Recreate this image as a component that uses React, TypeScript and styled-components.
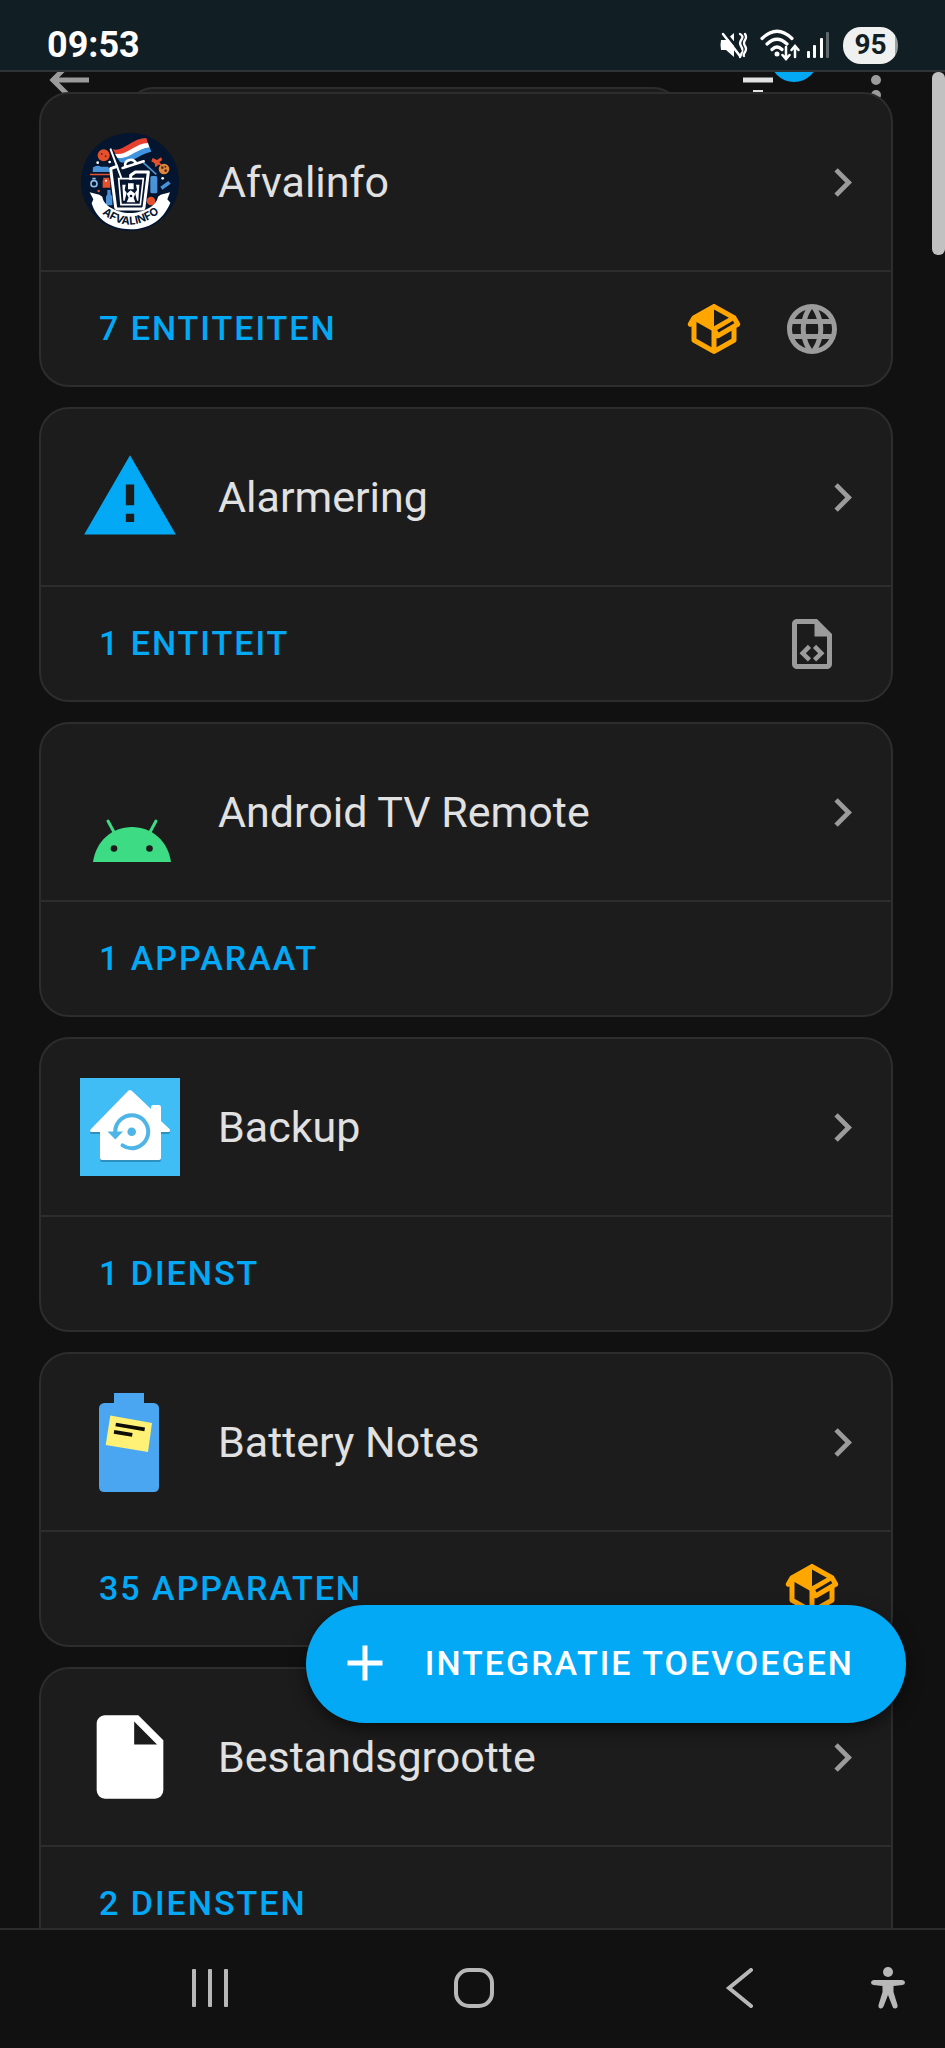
import React from "react";
import styled, { createGlobalStyle } from "styled-components";

const GlobalStyle = createGlobalStyle`
  *, *::before, *::after { box-sizing: border-box; }
  body {
    margin: 0;
    background: #111111;
    color: #e1e1e1;
    font-family: Roboto, "Liberation Sans", sans-serif;
  }
  button { font: inherit; color: inherit; background: none; border: 0; padding: 0; cursor: pointer; }
  a { color: inherit; text-decoration: none; }
  svg { display: block; flex: none; }
`;

const Screen = styled.div`
  display: flex;
  flex-direction: column;
  height: 100vh;
  overflow: hidden;
`;

/* ---------- status bar ---------- */

const StatusBar = styled.header`
  flex: none;
  display: flex;
  align-items: center;
  justify-content: space-between;
  height: 72px;
  padding: 20px 47px 0 47px;
  background: #111e24;
  border-bottom: 2px solid #2f3437;
  position: relative;
  z-index: 2;
`;

const Clock = styled.time`
  color: #ffffff;
  font-size: 36px;
  line-height: 40px;
  font-weight: 700;
`;

const StatusIcons = styled.div`
  display: flex;
  align-items: center;
  gap: 12px;
`;

const NetworkIcons = styled.div`
  display: flex;
  align-items: center;
  gap: 7px;
`;

const Battery = styled.span`
  display: flex;
  align-items: center;
  justify-content: center;
  width: 55px;
  height: 37px;
  border-radius: 18px;
  background: linear-gradient(90deg, #eff1f1 94%, #9a9fa1 94%);
  color: #111e24;
  font-size: 28px;
  line-height: 32px;
  font-weight: 700;
`;

/* ---------- scrolled content ---------- */

const Content = styled.main`
  flex: 1;
  min-height: 0;
  position: relative;
  overflow: hidden;
`;

const Scrolled = styled.div`
  margin-top: -22px;
`;

const Toolbar = styled.div`
  display: flex;
  align-items: flex-start;
  gap: 48px;
  height: 60px;
  padding: 0 39px;
`;

const IconButton = styled.button<{ $tone?: "muted" | "bright" }>`
  position: relative;
  width: 60px;
  height: 60px;
  flex: none;
  color: ${(p) => (p.$tone === "bright" ? "#e1e1e1" : "#9b9b9b")};
`;

const FilterBadge = styled.span`
  position: absolute;
  top: -16px;
  left: 42px;
  width: 48px;
  height: 48px;
  border-radius: 50%;
  background: #03a9f4;
`;

const SearchArea = styled.div`
  flex: 1;
  min-width: 0;
  display: flex;
  gap: 28px;
`;

const ToolbarActions = styled.div`
  flex: none;
  display: flex;
  gap: 58px;
`;

const SearchInput = styled.input`
  flex: 1;
  min-width: 0;
  height: 100px;
  margin-top: 37px;
  border: 2px solid #2d2d2d;
  border-radius: 26px;
  background: #1c1c1c;
  color: #e1e1e1;
  font: 43px/56px Roboto, sans-serif;
`;

const CardList = styled.ul`
  list-style: none;
  position: relative;
  display: flex;
  flex-direction: column;
  gap: 20px;
  margin: -18px 0 0;
  padding: 0 52px 0 39px;
`;

const Card = styled.li`
  background: #1c1c1c;
  border: 2px solid #2d2d2d;
  border-radius: 30px;
  overflow: hidden;
`;

const CardHeader = styled.a`
  display: flex;
  align-items: center;
  gap: 38px;
  height: 178px;
  padding: 0 20px 0 39px;
  border-bottom: 2px solid #2d2d2d;
  color: #9b9b9b;
`;

const CardTitle = styled.h2`
  flex: 1;
  margin: 0;
  color: #e1e1e1;
  font-size: 43px;
  line-height: 56px;
  font-weight: 400;
`;

const CardFooter = styled.div`
  display: flex;
  align-items: center;
  gap: 38px;
  height: 113px;
  padding: 0 49px 0 58px;
`;

const EntriesLink = styled.a`
  margin-right: auto;
  padding-bottom: 2px;
  color: #03a9f4;
  font-size: 34px;
  line-height: 40px;
  font-weight: 500;
  letter-spacing: 2px;
  text-transform: uppercase;
`;

const StateIcon = styled.svg<{ $custom?: boolean }>`
  width: 60px;
  height: 60px;
  fill: ${(p) => (p.$custom ? "#ffa600" : "#9b9b9b")};
`;

const ScrollThumb = styled.div`
  position: absolute;
  top: 0;
  right: 0;
  width: 13px;
  height: 183px;
  border-radius: 6px;
  background: #c1c1c1;
`;

const AddButton = styled.button`
  && {
    position: absolute;
    right: 39px;
    bottom: 205px;
    display: flex;
    align-items: center;
    gap: 30px;
    height: 118px;
    padding: 0 52px 2px 29px;
    border-radius: 59px;
    background: #03a9f4;
    color: #ffffff;
    box-shadow: 0 6px 16px rgba(0, 0, 0, 0.5);
    font-size: 34px;
    line-height: 40px;
    font-weight: 500;
    letter-spacing: 2px;
    text-transform: uppercase;
    white-space: nowrap;
  }
`;

/* ---------- system navigation ---------- */

const NavBar = styled.nav`
  flex: none;
  display: grid;
  grid-template-columns: repeat(3, 1fr) 34px;
  align-items: center;
  height: 120px;
  padding: 0 40px 2px 78px;
  border-top: 2px solid #2d2d2d;
  background: #111111;
`;

const NavButton = styled.button`
  display: flex;
  justify-content: center;
  color: #b8b8b8;
`;

/* ---------- icon paths ---------- */

const paths = {
  back: "M20,11V13H8L13.5,18.5L12.08,19.92L4.16,12L12.08,4.08L13.5,5.5L8,11H20Z",
  filter: "M6,13H18V11H6M3,6V8H21V6M10,18H14V16H10V18Z",
  dots: "M12,16A2,2 0 0,1 14,18A2,2 0 0,1 12,20A2,2 0 0,1 10,18A2,2 0 0,1 12,16M12,10A2,2 0 0,1 14,12A2,2 0 0,1 12,14A2,2 0 0,1 10,12A2,2 0 0,1 12,10M12,4A2,2 0 0,1 14,6A2,2 0 0,1 12,8A2,2 0 0,1 10,6A2,2 0 0,1 12,4Z",
  chevron: "M8.59,16.58L13.17,12L8.59,7.41L10,6L16,12L10,18L8.59,16.58Z",
  plus: "M19,13H13V19H11V13H5V11H11V5H13V11H19V13Z",
  custom:
    "M2,10.96C1.5,10.68 1.35,10.07 1.63,9.59L3.13,7C3.24,6.8 3.41,6.66 3.6,6.58L11.43,2.18C11.59,2.06 11.79,2 12,2C12.21,2 12.41,2.06 12.57,2.18L20.47,6.62C20.66,6.72 20.82,6.88 20.91,7.08L22.36,9.6C22.64,10.08 22.47,10.69 22,10.96L21,11.54V16.5C21,16.88 20.79,17.21 20.47,17.38L12.57,21.82C12.41,21.94 12.21,22 12,22C11.79,22 11.59,21.94 11.43,21.82L3.53,17.38C3.21,17.21 3,16.88 3,16.5V10.96C2.7,11.13 2.32,11.14 2,10.96M12,4.15V4.15L12,10.85V10.85L17.96,7.5L12,4.15M5,15.91L11,19.29V12.58L5,9.21V15.91M19,15.91V12.69L14,15.59C13.67,15.77 13.3,15.76 13,15.6V19.29L19,15.91M13.85,13.36L20.13,9.73L19.55,8.72L13.27,12.35L13.85,13.36Z",
  web: "M16.36,14C16.44,13.34 16.5,12.68 16.5,12C16.5,11.32 16.44,10.66 16.36,10H19.74C19.9,10.64 20,11.31 20,12C20,12.69 19.9,13.36 19.74,14M14.59,19.56C15.19,18.45 15.65,17.25 15.97,16H18.92C17.96,17.65 16.43,18.93 14.59,19.56M14.34,14H9.66C9.56,13.34 9.5,12.68 9.5,12C9.5,11.32 9.56,10.65 9.66,10H14.34C14.43,10.65 14.5,11.32 14.5,12C14.5,12.68 14.43,13.34 14.34,14M12,19.96C11.17,18.76 10.5,17.43 10.09,16H13.91C13.5,17.43 12.83,18.76 12,19.96M8,8H5.08C6.03,6.34 7.57,5.06 9.4,4.44C8.8,5.55 8.35,6.75 8,8M5.08,16H8C8.35,17.25 8.8,18.45 9.4,19.56C7.57,18.93 6.03,17.65 5.08,16M4.26,14C4.1,13.36 4,12.69 4,12C4,11.31 4.1,10.64 4.26,10H7.64C7.56,10.66 7.5,11.32 7.5,12C7.5,12.68 7.56,13.34 7.64,14M12,4.03C12.83,5.23 13.5,6.57 13.91,8H10.09C10.5,6.57 11.17,5.23 12,4.03M18.92,8H15.97C15.65,6.75 15.19,5.55 14.59,4.44C16.43,5.07 17.96,6.34 18.92,8M12,2C6.47,2 2,6.5 2,12A10,10 0 0,0 12,22A10,10 0 0,0 22,12A10,10 0 0,0 12,2Z",
  yaml: "M14,2H6C4.89,2 4,2.9 4,4V20C4,21.11 4.89,22 6,22H18C19.11,22 20,21.11 20,20V8L14,2M18,20H6V4H13V9H18V20M9.54,15.65L11.63,17.74L10.35,19L7,15.65L10.35,12.3L11.63,13.56L9.54,15.65M17,15.65L13.65,19L12.38,17.74L14.47,15.65L12.38,13.56L13.65,12.3L17,15.65Z",
  alert: "M13,14H11V9H13M13,18H11V16H13M1,21H23L12,2L1,21Z",
  file: "M13,9V3.5L18.5,9M6,2C4.89,2 4,2.89 4,4V20A2,2 0 0,0 6,22H18A2,2 0 0,0 20,20V8L14,2H6Z",
};

const Glyph = ({ d, size }: { d: string; size: number }) => (
  <svg viewBox="0 0 24 24" width={size} height={size} fill="currentColor" aria-hidden="true">
    <path d={d} />
  </svg>
);

/* ---------- integration logos ---------- */

const AfvalinfoLogo = () => (
  <svg viewBox="14 20 300 300" width="100" height="100" aria-hidden="true">
    <circle cx="164" cy="170" r="147" fill="#04152f" />
    {/* flag */}
    <path d="M112 72C142 82 170 38 213 38L218 54C182 56 150 98 121 86Z" fill="#e8402f" />
    <path d="M119 85C150 94 178 54 218 53L223 67C190 68 158 110 126 98Z" fill="#ffffff" />
    <path d="M126 97C158 106 186 68 223 66L228 79C196 84 162 120 134 110Z" fill="#3f95dd" />
    <path d="M106 72L138 158" stroke="#ffffff" strokeWidth="6" strokeLinecap="round" />
    {/* litter */}
    <g fill="#e2512c">
      <circle cx="85" cy="90" r="18" />
      <path d="M84 157h18v8h3v22H82v-22h2z" />
      <circle cx="227" cy="227" r="13" />
      <path d="M232 98l13 6 12-8 4 8-9 6 8 10-10-2-10 8-2-12-10-6z" />
      <circle cx="70" cy="197" r="4" />
      <path d="M44 145h62v5H44z" />
    </g>
    <circle cx="79" cy="86" r="3" fill="#7c2318" />
    <circle cx="91" cy="93" r="3" fill="#7c2318" />
    <circle cx="266" cy="131" r="16" fill="#e0873c" />
    <circle cx="261" cy="127" r="4" fill="#5a2c17" />
    <circle cx="271" cy="136" r="4" fill="#5a2c17" />
    <circle cx="270" cy="124" r="3" fill="#5a2c17" />
    <g fill="#4b93d8">
      <path d="M53 126q12-8 24-2h22l6 16H52z" />
      <rect x="225" y="152" width="21" height="52" rx="5" />
      <path d="M96 194h10v12l5 8v26H92v-26l4-8z" />
      <path d="M255 184l24-17 7 8-25 18z" />
    </g>
    <path d="M204 112L243 147" stroke="#4b93d8" strokeWidth="5" />
    <circle cx="56" cy="175" r="9" fill="none" stroke="#8dbbe6" strokeWidth="5" />
    <path d="M51 160h10" stroke="#8dbbe6" strokeWidth="5" />
    <g fill="#ffffff">
      <circle cx="67" cy="112" r="4" />
      <circle cx="103" cy="110" r="4" />
      <circle cx="262" cy="159" r="4" />
      <circle cx="92" cy="166" r="3" />
    </g>
    {/* bin */}
    <path
      d="M142 128L205 108M150 123c-6-18 22-28 32-10"
      fill="none"
      stroke="#ffffff"
      strokeWidth="8"
      strokeLinecap="round"
    />
    <path
      d="M128 122L106 130L121 247Q122 251 127 251H200Q205 251 206 246L219 140H180L166 150V164"
      fill="none"
      stroke="#ffffff"
      strokeWidth="9"
      strokeLinejoin="round"
    />
    <path d="M130 160H204L195 238H137Z" fill="none" stroke="#ffffff" strokeWidth="5" />
    <g fill="#ffffff">
      <path d="M141 178h10l-3 16 6 8-6 24h-4z" />
      <path d="M192 178h-10l3 16-6 8 6 24h4z" />
      <path d="M158 174h17v18h-17zM154 205l12-10 14 10-5 12 5 14h-26l6-14z" />
    </g>
    <circle cx="167" cy="212" r="4" fill="#04152f" />
    {/* ribbon */}
    <path
      d="M43 201L72 208L81 214C84 240 122 262 164 263C208 262 244 240 248 214L256 208L284 201L276 222L285 232C264 284 222 311 166 312C108 311 64 284 49 234L54 222Z"
      fill="#ffffff"
    />
    <path id="afvalinfo-ribbon" d="M66 252Q164 344 266 250" fill="none" />
    <text fill="#04152f" fontFamily="Inter, sans-serif" fontWeight="700" fontSize="33" textAnchor="middle">
      <textPath href="#afvalinfo-ribbon" startOffset="50%">
        AFVALINFO
      </textPath>
    </text>
  </svg>
);

const AndroidLogo = () => (
  <svg viewBox="0 0 100 100" width="100" height="100" aria-hidden="true">
    <path d="M13 100C16 79 32 65 52 65S88 79 91 100Z" fill="#3ddc84" />
    <path d="M28 59L35 72M76 59L69 72" stroke="#3ddc84" strokeWidth="3" strokeLinecap="round" />
    <circle cx="34" cy="86.5" r="3.3" fill="#1c1c1c" />
    <circle cx="69.5" cy="86.5" r="3.3" fill="#1c1c1c" />
  </svg>
);

const BackupLogo = () => (
  <svg viewBox="0 0 100 100" width="100" height="100" aria-hidden="true">
    <rect y="1" width="100" height="98" fill="#41bdf5" />
    <path
      d="M20 57H11Q9 55 11 53L48 14.500Q50 12 52 14.500L71 33V30Q71 28 73 28H79Q81 28 81 30V44L89.500 53Q91 55 89 57H81V83Q81 85 79 85H22Q20 85 20 83Z"
      fill="#2f8fbd"
    />
    <path
      d="M20 55H11Q9 54 11 52L48 14Q50 12 52 14L71 32V30Q71 28 73 28H79Q81 28 81 30V44L89.500 52Q91 54 89 55H81V81Q81 83 79 83H22Q20 83 20 81Z"
      fill="#ffffff"
    />
    <path
      d="M35.200 54.700A16.500 16.500 0 1 1 42.500 68.400"
      fill="none"
      stroke="#4fb5e6"
      strokeWidth="4"
      strokeLinecap="round"
    />
    <path d="M27.500 54.500H43L35.300 62.500Z" fill="#4fb5e6" />
    <circle cx="51.700" cy="54.700" r="4.300" fill="#4fb5e6" />
  </svg>
);

const BatteryLogo = () => (
  <svg viewBox="0 0 100 100" width="100" height="100" aria-hidden="true">
    <path
      d="M34 1H64V11H73.500Q79 11.500 79 16.500V94.500Q79 100 73.500 100H24.500Q19 100 19 94.500V16.500Q19 11.500 24.500 11H34Z"
      fill="#4ba6f2"
    />
    <path d="M30.300 23.500L72 31L68 60L25.700 53Z" fill="#fff176" />
    <path d="M35.700 32.500L64.700 37.300M34 39.800L52.300 42.800" stroke="#0d0d05" strokeWidth="3.700" />
  </svg>
);

const SoundOffIcon = () => (
  <svg viewBox="0 0 28 28" width="28" height="28" aria-hidden="true">
    <path d="M1 9H6L14 2V26L6 19H1Q0 14 1 9Z" fill="#ffffff" />
    <path
      d="M20 3q4 2 1.500 5.500T21 15t1 6-2 5M25 3q2 3 0 6t0 6 0 6-1 4"
      fill="none"
      stroke="#ffffff"
      strokeWidth="2.300"
      strokeLinecap="round"
    />
    <path d="M5 2L21 21" stroke="#111e24" strokeWidth="3" />
    <path d="M3 3L20 25" stroke="#ffffff" strokeWidth="2.500" strokeLinecap="round" />
  </svg>
);

const WifiIcon = () => (
  <svg viewBox="0 0 40 32" width="40" height="32" fill="none" stroke="#ffffff" aria-hidden="true">
    <path d="M2 9.500Q17 -5 32 9.500M7 15Q17 5.500 27 15M12 20.500Q17 15.500 22 20.500" strokeWidth="3.200" strokeLinecap="round" />
    <circle cx="17" cy="25" r="2.500" fill="#ffffff" stroke="none" />
    <path d="M26 18V29M22.500 26L26 30L29.500 26M35 28V18M31.500 21L35 17L38.500 21" strokeWidth="2.500" strokeLinecap="round" />
  </svg>
);

const SignalIcon = () => (
  <svg viewBox="0 0 24 28" width="24" height="28" fill="#ffffff" aria-hidden="true">
    <rect x="0" y="20" width="3" height="7" rx="1" />
    <rect x="6" y="14" width="3" height="13" rx="1" />
    <rect x="13" y="7" width="3" height="20" rx="1" />
    <rect x="19" y="1" width="3" height="26" rx="1" fill="#5f696d" />
  </svg>
);

/* ---------- data ---------- */

type Mark = "custom" | "web" | "yaml";

interface Integration {
  name: string;
  entries: string;
  logo: React.ReactNode;
  marks?: Mark[];
}

const markLabels: Record<Mark, string> = {
  custom: "Aangepaste integratie",
  web: "Cloud",
  yaml: "YAML",
};

const integrations: Integration[] = [
  { name: "Afvalinfo", entries: "7 entiteiten", logo: <AfvalinfoLogo />, marks: ["custom", "web"] },
  {
    name: "Alarmering",
    entries: "1 entiteit",
    logo: (
      <svg viewBox="0 0 24 24" width="100" height="100" fill="#03a9f4" aria-hidden="true">
        <path d={paths.alert} />
      </svg>
    ),
    marks: ["yaml"],
  },
  { name: "Android TV Remote", entries: "1 apparaat", logo: <AndroidLogo /> },
  { name: "Backup", entries: "1 dienst", logo: <BackupLogo /> },
  { name: "Battery Notes", entries: "35 apparaten", logo: <BatteryLogo />, marks: ["custom"] },
  {
    name: "Bestandsgrootte",
    entries: "2 diensten",
    logo: (
      <svg viewBox="0 0 24 24" width="100" height="100" fill="#ffffff" aria-hidden="true">
        <path d={paths.file} />
      </svg>
    ),
  },
];

const IntegrationCard = ({ name, entries, logo, marks = [] }: Integration) => (
  <Card>
    <CardHeader href="#">
      {logo}
      <CardTitle>{name}</CardTitle>
      <Glyph d={paths.chevron} size={57} />
    </CardHeader>
    <CardFooter>
      <EntriesLink href="#">{entries}</EntriesLink>
      {marks.map((mark) => (
        <StateIcon key={mark} viewBox="0 0 24 24" $custom={mark === "custom"} role="img" aria-label={markLabels[mark]}>
          <path d={paths[mark]} />
        </StateIcon>
      ))}
    </CardFooter>
  </Card>
);

export default function App() {
  return (
    <Screen>
      <GlobalStyle />
      <StatusBar>
        <Clock>09:53</Clock>
        <StatusIcons>
          <SoundOffIcon />
          <NetworkIcons>
            <WifiIcon />
            <SignalIcon />
          </NetworkIcons>
          <Battery>95</Battery>
        </StatusIcons>
      </StatusBar>

      <Content>
        <Scrolled>
          <Toolbar>
            <SearchArea>
              <IconButton aria-label="Terug">
                <Glyph d={paths.back} size={60} />
              </IconButton>
              <SearchInput type="search" aria-label="Zoek integraties" />
            </SearchArea>
            <ToolbarActions>
              <IconButton $tone="bright" aria-label="Filter">
                <Glyph d={paths.filter} size={60} />
                <FilterBadge />
              </IconButton>
              <IconButton aria-label="Meer opties">
                <Glyph d={paths.dots} size={60} />
              </IconButton>
            </ToolbarActions>
          </Toolbar>
          <CardList>
            {integrations.map((item) => (
              <IntegrationCard key={item.name} {...item} />
            ))}
          </CardList>
        </Scrolled>
        <ScrollThumb />
        <AddButton>
          <Glyph d={paths.plus} size={60} />
          Integratie toevoegen
        </AddButton>
      </Content>

      <NavBar>
        <NavButton aria-label="Recente apps">
          <svg viewBox="0 0 40 40" width="40" height="40" fill="currentColor">
            <rect x="2" y="1" width="4" height="38" rx="1" />
            <rect x="18" y="1" width="4" height="38" rx="1" />
            <rect x="34" y="1" width="4" height="38" rx="1" />
          </svg>
        </NavButton>
        <NavButton aria-label="Startscherm">
          <svg viewBox="0 0 40 40" width="40" height="40" fill="none" stroke="currentColor" strokeWidth="4">
            <rect x="2" y="2" width="36" height="36" rx="13" />
          </svg>
        </NavButton>
        <NavButton aria-label="Vorige">
          <svg viewBox="0 0 40 40" width="40" height="40" fill="none" stroke="currentColor" strokeWidth="4" strokeLinecap="round">
            <path d="M32 2L10 20L32 38" />
          </svg>
        </NavButton>
        <NavButton aria-label="Toegankelijkheid">
          <svg viewBox="0 0 34 42" width="34" height="42" fill="currentColor">
            <circle cx="17" cy="5" r="5" />
            <path d="M2.500 13H31.500Q34 13.500 34 15.500T31.500 18L22.500 19V25L26.500 38Q27 41 24.500 41.500T21.500 39.500L17 28L12.500 39.500Q11.500 42 9.300 41.500T7.500 38L11.500 25V19L2.500 18Q0 17.500 0 15.500T2.500 13Z" />
          </svg>
        </NavButton>
      </NavBar>
    </Screen>
  );
}
